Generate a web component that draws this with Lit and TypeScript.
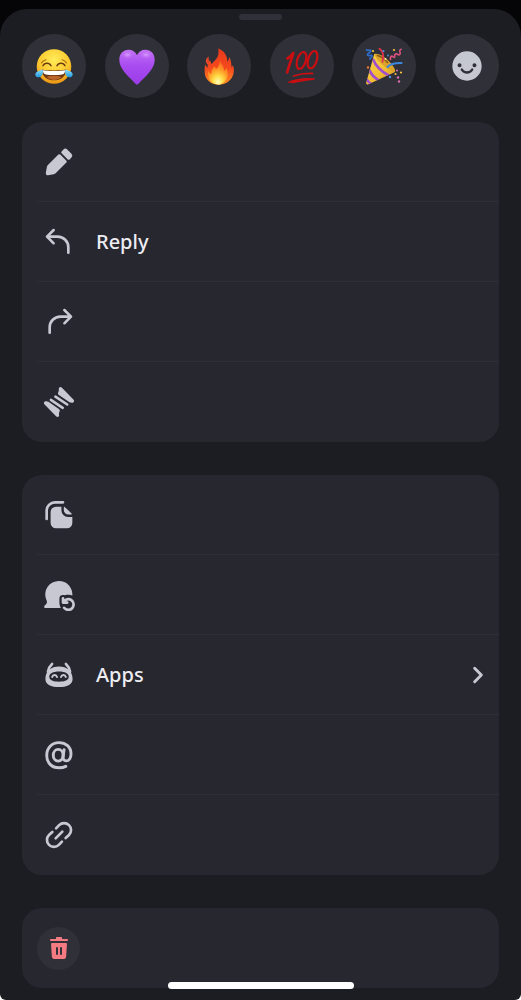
import { LitElement, html, svg, css, nothing, type TemplateResult } from "lit";
import { customElement, property } from "lit/decorators.js";

type Shape = TemplateResult;

interface Action {
  id: string;
  name: string;
  text?: string;
  more?: boolean;
}

/* Line and solid icons, drawn on a 24-unit grid. */
const icons: Record<string, Shape> = {
  pencil: svg`<path d="m13.96 5.46 4.58 4.58a1 1 0 0 0 1.42 0l1.38-1.38a2 2 0 0 0 0-2.82l-3.18-3.18a2 2 0 0 0-2.82 0l-1.38 1.38a1 1 0 0 0 0 1.42ZM2.11 20.16l.73-4.22a3 3 0 0 1 .83-1.61l7.87-7.87a1 1 0 0 1 1.42 0l4.58 4.58a1 1 0 0 1 0 1.42l-7.87 7.87a3 3 0 0 1-1.6.83l-4.23.73a1.5 1.5 0 0 1-1.73-1.73Z"/>`,
  reply: svg`<path d="M2.3 7.3a1 1 0 0 0 0 1.4l5 5a1 1 0 0 0 1.4-1.4L5.42 9H11a7 7 0 0 1 7 7v4a1 1 0 1 0 2 0v-4a9 9 0 0 0-9-9H5.41l3.3-3.3a1 1 0 0 0-1.42-1.4l-5 5Z"/>`,
  forward: svg`<path d="M21.7 7.3a1 1 0 0 1 0 1.4l-5 5a1 1 0 0 1-1.4-1.4L18.58 9H13a7 7 0 0 0-7 7v4a1 1 0 1 1-2 0v-4a9 9 0 0 1 9-9h5.59l-3.3-3.3a1 1 0 0 1 1.42-1.4l5 5Z"/>`,
  thread: svg`<path d="M12 1.500c.5-.9 1.500-.9 2.200-.2l8.600 8.800c1.100 1.200.2 2.700-1.300 2.400l-1.600-.3-8-5.500c-.6-.4-.8-1-.6-1.600l.5-1.400c.2-.7-.1-1.500.2-2.200ZM12 22.500c-.5.9-1.500.9-2.200.2L1.200 13.900c-1.100-1.200-.2-2.700 1.300-2.400l1.600.3 7.800 5.500c.6.400.8 1 .6 1.600l-.5 1.400c-.2.700.3 1.500 0 2.200Z"/><path d="m9.300 8 8.900 5.900M5.900 10.400l8.900 6" fill="none" stroke="currentColor" stroke-width="1.900" stroke-linecap="round"/>`,
  copy: svg`<path d="M2.750 15V9A6.300 6.300 0 0 1 9 2.500h6" fill="none" stroke="currentColor" stroke-width="2" stroke-linecap="round"/><path d="M9.700 5.750h4.100v2.750a5 5 0 0 0 5 5H22V18a4 4 0 0 1-4 4H9.700a4 4 0 0 1-4-4V9.750a4 4 0 0 1 4-4Z"/><path d="M15.600 6.500c0-.6.400-.8.9-.4l4.900 4.700c.4.400.2.900-.4.900h-1.900a3.500 3.500 0 0 1-3.500-3.500V6.500Z"/>`,
  unread: svg`<path d="M11.900 1.500A10.100 10.100 0 0 1 22 12.400c-.7-.3-2.200-.6-3.300-.6-.8 0-1.500.1-2.200.400-2.200-.5-4.200 0-4.200 2.400v3c0 1.500.4 2.400 1 4.200H1.900c-1 0-1.400-1.200-.6-1.900.8-.7 1.700-1.500 1.700-2.600 0-.7-.3-1.300-.6-2A10.100 10.100 0 0 1 11.900 1.500Z"/><path d="M15 14.500v3.200h3.200M15.400 17.300a4 4 0 1 1 .4 4.300" fill="none" stroke="currentColor" stroke-width="2" stroke-linecap="round" stroke-linejoin="round"/>`,
  apps: svg`<path d="M6.800 3.700C5.300 5 4.200 7 3.700 9.500M17.200 3.700c1.500 1.300 2.600 3.300 3.100 5.800" fill="none" stroke="currentColor" stroke-width="2" stroke-linecap="round"/><path fill-rule="evenodd" d="M12 5.700c6 0 10.200 3.600 10.200 9.400 0 4-4.400 5.900-10.200 5.900S1.800 19.100 1.800 15.100C1.800 9.300 6 5.700 12 5.700Zm0 3.700c-4.700 0-7.300 1.600-7.300 3.900 0 2.500 2.900 3.700 7.300 3.700s7.300-1.200 7.300-3.700c0-2.300-2.600-3.900-7.300-3.900Z"/><path d="M6.900 13.500c.5-1.900 3-1.900 3.600 0M13.500 13.500c.6-1.900 3.100-1.900 3.600 0" fill="none" stroke="currentColor" stroke-width="1.500" stroke-linecap="round"/>`,
  mention: svg`<g fill="none" stroke="currentColor" stroke-width="2.200" stroke-linecap="round"><ellipse cx="11.400" cy="12.200" rx="3.700" ry="4.400"/><path d="m15.800 8-.7 5.200c-.3 2 .7 3.200 2.200 3.200 2.300 0 3.700-2.300 3.700-5.200C21 6 17.200 2.700 12 2.700c-5.400 0-9.200 4-9.200 9.500 0 5.700 3.700 9.400 9.300 9.400 1.900 0 3.600-.4 5-1.100"/></g>`,
  link: svg`<g fill="none" stroke="currentColor" stroke-width="2" stroke-linecap="round"><path d="m9.800 7 2.300-2.400a5.200 5.200 0 0 1 7.400 7.400L17 14.300M14.200 17l-2.300 2.400a5.200 5.200 0 0 1-7.400-7.400L7 9.700M9.500 14.500l5-5"/></g>`,
  chevron: svg`<path d="m9.500 7 5 5-5 5" fill="none" stroke="currentColor" stroke-width="2.200" stroke-linecap="round" stroke-linejoin="round"/>`,
  trash: svg`<path d="M14.250 1c.41 0 .75.34.75.75V3h5.250c.41 0 .75.34.75.75v.5c0 .41-.34.75-.75.75H3.750A.75.75 0 0 1 3 4.250v-.5c0-.41.34-.75.75-.75H9V1.750c0-.41.34-.75.75-.75h4.500Z"/><path fill-rule="evenodd" d="M5.060 7a1 1 0 0 0-1 1.060l.76 12.130a3 3 0 0 0 3 2.810h8.360a3 3 0 0 0 3-2.810l.75-12.130a1 1 0 0 0-1-1.060H5.070ZM11 12a1 1 0 1 0-2 0v6a1 1 0 1 0 2 0v-6Zm3-1a1 1 0 0 1 1 1v6a1 1 0 1 1-2 0v-6a1 1 0 0 1 1-1Z"/>`,
  smiley: svg`<path fill-rule="evenodd" d="M12 1a11 11 0 1 1 0 22 11 11 0 0 1 0-22ZM6.400 10a1.500 1.500 0 1 0 0 3 1.500 1.500 0 0 0 0-3Zm11.200 0a1.500 1.500 0 1 0 0 3 1.500 1.500 0 0 0 0-3ZM8.900 14.200a.9.9 0 0 0-1.500 1c1 1.700 2.700 2.600 4.600 2.600s3.600-.9 4.600-2.600a.9.9 0 0 0-1.500-1c-.7 1.100-1.800 1.700-3.100 1.700s-2.400-.6-3.100-1.700Z"/>`,
};

/* Full-colour reaction pictures, drawn on a 40-unit grid. */
const reactions: { name: string; art: Shape }[] = [
  {
    name: "Joy",
    art: svg`<defs>
        <radialGradient id="face" cx=".5" cy=".3" r=".75"><stop offset="0" stop-color="#ffec58"/><stop offset=".6" stop-color="#fcc72e"/><stop offset="1" stop-color="#e68a10"/></radialGradient>
        <linearGradient id="tear" x1="0" y1="0" x2="0" y2="1"><stop offset="0" stop-color="#8fdcfb"/><stop offset="1" stop-color="#1f9bdf"/></linearGradient>
      </defs>
      <circle cx="20" cy="20.500" r="17.300" fill="url(#face)"/>
      <path d="M8.500 23.500c3 1.200 20 1.200 23 0 1 0 1.200.7 1 1.500C31 31 26.500 34.300 20 34.300S9 31 7.500 25c-.2-.8 0-1.500 1-1.500Z" fill="#6b3410"/>
      <path d="M9 24.200c4 1 18 1 22 0 .2 2.300-1 4-2.800 4.300-4 .7-12.400.7-16.400 0C10 28.200 8.800 26.500 9 24.200Z" fill="#fff"/>
      <path d="M12.500 31c3.500-1.700 11.500-1.700 15 0-2 2-4.500 2.900-7.500 2.900s-5.500-.9-7.500-2.900Z" fill="#b9642a"/>
      <path d="M9 19.800c1.500-3.300 6.500-3.300 8 0M23 19.800c1.500-3.300 6.500-3.300 8 0" fill="none" stroke="#6b3b10" stroke-width="1.500" stroke-linecap="round"/>
      <path d="M7.500 17c1-1.800 2.600-2.900 4.500-3.200M32.500 17c-1-1.800-2.600-2.900-4.500-3.200" fill="none" stroke="#a5640f" stroke-width="1.100" stroke-linecap="round"/>
      <path d="M8.800 23.500c.7 3.500-.6 7.700-4.300 7.800-3.500 0-4.100-3.900-1.800-5.400 1.800-1.200 4.200-1.500 6.100-2.400ZM31.200 23.500c-.7 3.500.6 7.700 4.300 7.800 3.500 0 4.100-3.900 1.800-5.400-1.800-1.200-4.200-1.500-6.100-2.400Z" fill="url(#tear)"/>`,
  },
  {
    name: "Purple heart",
    art: svg`<defs>
        <linearGradient id="heart" x1="0" y1="0" x2="0" y2="1"><stop offset="0" stop-color="#c271f6"/><stop offset=".45" stop-color="#a94cf0"/><stop offset="1" stop-color="#9b3be8"/></linearGradient>
        <radialGradient id="gloss"><stop offset="0" stop-color="#dca6ff" stop-opacity=".9"/><stop offset="1" stop-color="#c271f6" stop-opacity="0"/></radialGradient>
      </defs>
      <path d="M20 9.300C18.500 5.800 15.500 3.800 11.500 3.800 6 3.800 2.300 8 2.300 13.800c0 9.500 9.200 16.500 16.400 24.100.8.9 1.800.9 2.600 0 7.200-7.600 16.400-14.600 16.400-24.100 0-5.800-3.700-10-9.200-10-4 0-7 2-8.500 5.500Z" fill="url(#heart)"/>
      <ellipse cx="10.500" cy="8.800" rx="6" ry="4" fill="url(#gloss)"/><ellipse cx="29" cy="8.800" rx="6" ry="4" fill="url(#gloss)"/>`,
  },
  {
    name: "Fire",
    art: svg`<defs>
        <linearGradient id="flame" x1="0" y1="0" x2="0" y2="1"><stop offset="0" stop-color="#e8391c"/><stop offset=".55" stop-color="#f5491d"/><stop offset="1" stop-color="#ff9424"/></linearGradient>
        <radialGradient id="core" cx=".5" cy=".9" r=".8"><stop offset="0" stop-color="#fffcc0"/><stop offset=".3" stop-color="#ffe04a"/><stop offset=".65" stop-color="#ff9a26"/><stop offset="1" stop-color="#fa6a22"/></radialGradient>
      </defs>
      <path d="M19.300 2.300c6 2.800 9 7.200 9 13.400 1.100-1 1.700-2.600 1.800-4.600 2.500 3.600 1.800 6.800 2.700 10.300.5-.8.900-1.500 1.200-2.400 3 8.600-1.500 18.700-13.500 19.700C10.500 38.700 5.700 32.500 5.700 26c0-3-.1-5 .5-7.500.8 1.500 1.300 2.500 2.300 3.200.2-3.700.5-5.400 2.500-7.700l1.600 4.200c1.900-2.600 4.900-4.800 6.100-7.700 1-2.600 1-5.200.6-8.200Z" fill="url(#flame)"/>
      <path d="M8.400 18.500C5.600 15 7 12.300 9.800 10.500c-.6 2.500.6 5 .2 7Z" fill="#e8482a"/>
      <path d="M20.800 13.700c1.200 3.700 4.400 6.600 4.200 11.300 1.300-.7 2-1.800 2.300-3.200 3.200 6 1.700 14.200-7 16.900-8.500-.6-12.300-6-11-13.700 1 1.700 1.700 2.400 2.900 3.300.2-4 1.400-6 3.700-8l1 3c2.400-2.400 4.100-5.500 3.900-9.600Z" fill="url(#core)"/>`,
  },
  {
    name: "Hundred points",
    art: svg`<g fill="none" stroke="#cc0d11" stroke-linecap="round">
        <ellipse cx="19.500" cy="14.500" rx="4.300" ry="8.800" transform="rotate(17 19.500 14.500)" stroke-width="2.200"/>
        <ellipse cx="30.500" cy="13.700" rx="4.300" ry="9" transform="rotate(17 30.500 13.700)" stroke-width="2.200"/>
        <path d="M5.500 12.500C8 11 9.700 9.200 11.300 7 9.500 14 7 19 5.200 26.500" stroke-width="2.700" stroke-linejoin="round"/>
        <path d="M11.500 30c6-2 12-2.700 19-2.500" stroke-width="1.800"/>
        <path d="M7 36.200c8-3.200 16-4 25-3.200-8 .8-15 2.200-22 3.400" stroke-width="1.600" stroke-linejoin="round"/>
      </g>`,
  },
  {
    name: "Party popper",
    art: svg`<defs>
        <linearGradient id="cone" x1="0" y1="0" x2="1" y2="1"><stop offset="0" stop-color="#ffdf54"/><stop offset=".55" stop-color="#f3bd31"/><stop offset="1" stop-color="#b97a1c"/></linearGradient>
        <clipPath id="cut"><path d="M10.300 8C17 8.500 28.500 18 31 26L4.500 38.200c-1.800.8-2.800-.4-2.200-2Z"/></clipPath>
      </defs>
      <g clip-path="url(#cut)"><path d="M0 0h40v40H0Z" fill="url(#cone)"/>
        <path d="M9 13c2.500 7 8 12.500 16.500 17M5.500 24c1.500 4.500 5 8 10.500 11M2.500 33c1 2 2.500 3.500 5 5" fill="none" stroke="#a14fcf" stroke-width="2.600"/></g>
      <path d="M10.300 8c4-1 10 2.500 14.500 7s7.200 9 6.200 11c-5.500-1-19-11-20.700-18Z" fill="#dca32b"/>
      <path d="M13.500 9.500c3.500 1 7.500 4 10 7" fill="none" stroke="#8a5a16" stroke-width="1.600" stroke-linecap="round"/>
      <path d="M15.500 2.800c4 2.500 4.500 7 3 13" fill="none" stroke="#e1344d" stroke-width="1.900" stroke-linecap="round"/>
      <path d="M23.500 21c3-3.500 7.500-4.200 14-4" fill="none" stroke="#3c86dd" stroke-width="2.200" stroke-linecap="round"/>
      <path d="M2.500 3.800c2 1.700 4-1 4.300 1S2.500 7.300 3.500 9s4.500-.8 4.500 1.200-2.500 1.300-2 3" fill="none" stroke="#2f6fd0" stroke-width="1.600" stroke-linecap="round"/>
      <path d="M26.500 13.500c-.6-2.500 1.200-4.200 2.200-3s2.300 1.300 2-.700 1.600-2.600 2.900-1.400 3.200.2 2.500-1.800-.8-2.600 1-3.300" fill="none" stroke="#e0527d" stroke-width="1.600" stroke-linecap="round"/>
      <g fill="#f5c63c"><circle cx="9" cy="5" r="1.100"/><circle cx="30" cy="4" r="1.100"/><circle cx="37" cy="26.500" r="1.100"/><circle cx="31.500" cy="28" r="1"/></g>
      <g fill="#4a8fe6"><circle cx="19.500" cy="5" r="1.100"/><circle cx="26" cy="31" r="1.200"/><circle cx="24" cy="9.500" r=".9"/></g>
      <g fill="#dd6cb0"><circle cx="34" cy="31.500" r="1.200"/><circle cx="35" cy="35.500" r="1.200"/><circle cx="33" cy="24.500" r="1"/></g>
      <circle cx="4" cy="21.500" r="1.200" fill="#e87432"/><circle cx="21.500" cy="13" r="1" fill="#f0e3b0"/>`,
  },
];

const groups: Action[][] = [
  [
    { id: "pencil", name: "Edit" },
    { id: "reply", name: "Reply", text: "Reply" },
    { id: "forward", name: "Forward" },
    { id: "thread", name: "Thread" },
  ],
  [
    { id: "copy", name: "Copy" },
    { id: "unread", name: "Mark unread" },
    { id: "apps", name: "Apps", text: "Apps", more: true },
    { id: "mention", name: "Mention" },
    { id: "link", name: "Copy link" },
  ],
];

@customElement("sheet-icon")
class SheetIcon extends LitElement {
  @property() name = "";

  static styles = css`
    :host {
      display: block;
      flex: none;
      width: 32px;
      height: 32px;
    }
    svg {
      display: block;
      width: 100%;
      height: 100%;
    }
  `;

  render() {
    return html`<svg viewBox="0 0 24 24" fill="currentColor" aria-hidden="true">${icons[this.name]}</svg>`;
  }
}

@customElement("action-group")
class ActionGroup extends LitElement {
  @property({ attribute: false }) actions: Action[] = [];

  static styles = css`
    :host {
      display: block;
      overflow: hidden;
      border-radius: 20px;
      background: #272730;
    }
    .row {
      display: flex;
      align-items: center;
      gap: 21px;
      box-sizing: border-box;
      width: 100%;
      height: 80px;
      margin: 0;
      padding: 0 5px 0 21px;
      border: 0;
      background: linear-gradient(#2e2e37, #2e2e37) 15px 100% / 100% 1px no-repeat;
      color: #c8c8d2;
      font: 500 20px/24px "Noto Sans", "Open Sans", sans-serif;
      text-align: left;
      cursor: pointer;
    }
    .row:last-child {
      background: none;
    }
    .text {
      flex: 1;
      color: #ededf2;
    }
  `;

  render() {
    return this.actions.map(
      (a) => html`<button class="row" type="button" aria-label=${a.name}>
        <sheet-icon name=${a.id}></sheet-icon>
        ${a.text ? html`<span class="text">${a.text}</span>` : nothing}
        ${a.more ? html`<sheet-icon name="chevron"></sheet-icon>` : nothing}
      </button>`,
    );
  }
}

@customElement("app-root")
class AppRoot extends LitElement {
  static styles = css`
    :host {
      display: flex;
      flex-direction: column;
      box-sizing: border-box;
      position: relative;
      min-height: 100vh;
      padding-top: 9px;
      background: linear-gradient(#050507 50%, #ffffff 50%);
    }
    .sheet {
      flex: 1;
      display: flex;
      flex-direction: column;
      padding: 5px 22px 12px;
      border-radius: 27px 27px 6px 6px;
      background: #1c1d22;
    }
    .handle {
      align-self: center;
      width: 43px;
      height: 6px;
      border-radius: 3px;
      background: #303138;
    }
    .reactions {
      display: flex;
      justify-content: space-between;
      margin: 14px 0 24px;
    }
    .reaction {
      display: grid;
      place-items: center;
      width: 64px;
      height: 64px;
      padding: 0;
      border: 0;
      border-radius: 50%;
      background: #303138;
      color: #c6c8d1;
      cursor: pointer;
    }
    .art {
      display: block;
      width: 40px;
      height: 40px;
    }
    .groups {
      display: flex;
      flex-direction: column;
      gap: 33px;
    }
    .delete {
      display: flex;
      align-items: center;
      width: 100%;
      height: 80px;
      padding: 0 15px;
      border: 0;
      border-radius: 20px;
      background: #272730;
      color: #f57b82;
      cursor: pointer;
    }
    .badge {
      display: grid;
      place-items: center;
      width: 43px;
      height: 43px;
      border-radius: 50%;
      background: #303138;
    }
    .small {
      width: 24px;
      height: 24px;
    }
    .home {
      position: absolute;
      bottom: 11px;
      left: 50%;
      width: 186px;
      height: 7px;
      border-radius: 4px;
      background: #ffffff;
      transform: translateX(-50%);
    }
  `;

  render() {
    return html`
      <main class="sheet">
        <div class="handle"></div>
        <div class="reactions">
          ${reactions.map(
            (r) => html`<button class="reaction" type="button" aria-label=${r.name}>
              <svg class="art" viewBox="0 0 40 40" aria-hidden="true">${r.art}</svg>
            </button>`,
          )}
          <button class="reaction" type="button" aria-label="More reactions">
            <sheet-icon name="smiley"></sheet-icon>
          </button>
        </div>
        <div class="groups">
          ${groups.map((g) => html`<action-group .actions=${g}></action-group>`)}
          <button class="delete" type="button" aria-label="Delete">
            <span class="badge"><sheet-icon class="small" name="trash"></sheet-icon></span>
          </button>
        </div>
      </main>
      <div class="home"></div>
    `;
  }
}
